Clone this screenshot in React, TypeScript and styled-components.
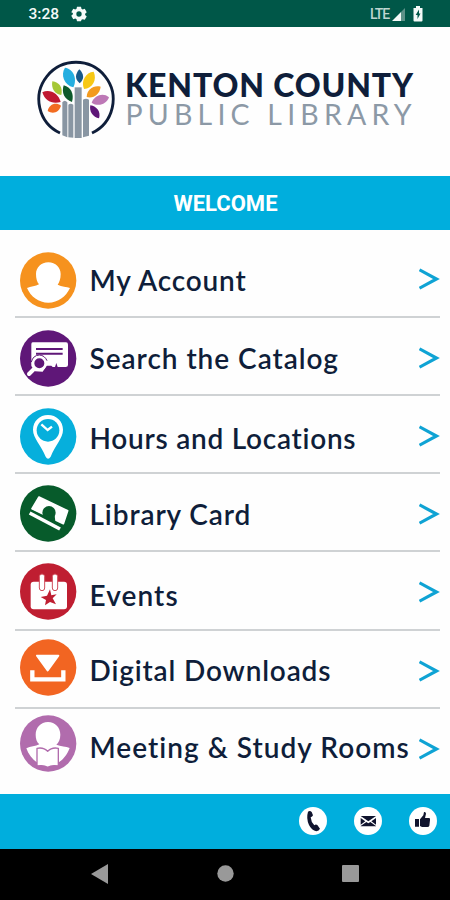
import React from 'react';
import styled, { createGlobalStyle } from 'styled-components';

const GlobalStyle = createGlobalStyle`
  * { box-sizing: border-box; }
  body { margin: 0; background: #fff; }
  svg { display: block; }
`;

const Screen = styled.div`
  width: 450px;
  height: 900px;
  display: flex;
  flex-direction: column;
  overflow: hidden;
  background: #fefefe;
  color: #0f1e3a;
  font-family: Lato, 'Liberation Sans', sans-serif;
`;

const StatusBar = styled.header`
  height: 26.5px;
  flex: none;
  display: flex;
  align-items: center;
  padding: 2px 27px 0 28.5px;
  background: #005748;
  font-family: Roboto, sans-serif;
`;

const Clock = styled.span`
  color: #f4faf8;
  font-size: 15.5px;
  font-weight: 500;
  line-height: 20px;
  margin-right: 12px;
`;

const StatusGroup = styled.div`
  margin-left: auto;
  display: flex;
  align-items: center;
`;

const Network = styled.span`
  color: #bfd5d0;
  font-size: 14px;
  font-weight: 500;
  letter-spacing: -1.1px;
  line-height: 20px;
  margin-right: 3px;
`;

const Brand = styled.section`
  height: 149px;
  flex: none;
  display: flex;
  align-items: flex-start;
  padding: 23.5px 0 0 30px;
`;

const BrandArt = styled.svg`
  width: 95px;
  height: 100px;
  flex: none;
  overflow: visible;
`;

const Wordmark = styled.div`
  padding-top: 20px;
  display: flex;
  flex-direction: column;
  white-space: nowrap;
`;

const BrandName = styled.span`
  font-size: 32px;
  font-weight: 900;
  letter-spacing: 0.85px;
  line-height: 30px;
`;

const BrandKind = styled.span`
  margin-left: 0.5px;
  font-size: 28.500px;
  font-weight: 400;
  letter-spacing: 5.2px;
  line-height: 28px;
  color: #8c99a6;
`;

const Banner = styled.h1`
  height: 54px;
  flex: none;
  margin: 0;
  padding: 2px 0 0 1px;
  display: flex;
  align-items: center;
  justify-content: center;
  background: #00aedd;
  color: #fff;
  font: 700 22px/26px Roboto, sans-serif;
`;

const Menu = styled.nav`
  flex: none;
  height: 564px;
  display: flex;
  flex-direction: column;
  padding: 0 10px 0 15px;
`;

const MenuRow = styled.a<{ $height: number }>`
  height: ${(p) => p.$height}px;
  flex: none;
  display: grid;
  grid-template-columns: 74.5px 1fr 21px;
  align-items: start;
  border-bottom: 2px solid #cfd2d4;
  &:last-child { border-bottom: 0; }
`;

const Badge = styled.svg<{ $top: number }>`
  width: 57px;
  height: 57px;
  margin: ${(p) => p.$top}px 0 0 4.5px;
`;

const Label = styled.span<{ $top: number; $spacing: number }>`
  margin-top: ${(p) => p.$top}px;
  font-size: 28px;
  font-weight: 600;
  line-height: 32px;
  letter-spacing: ${(p) => p.$spacing}px;
  white-space: nowrap;
`;

const Chevron = styled.svg<{ $top: number }>`
  width: 21px;
  height: 24px;
  margin-top: ${(p) => p.$top}px;
`;

const ActionBar = styled.footer`
  height: 55px;
  flex: none;
  display: flex;
  align-items: center;
  justify-content: flex-end;
  gap: 27px;
  padding-right: 13px;
  background: #00aedd;
`;

const ActionIcon = styled.svg`
  width: 28px;
  height: 28px;
`;

const SystemNav = styled.div`
  flex: 1;
  display: flex;
  justify-content: space-between;
  align-items: center;
  padding: 0 91px 1px;
  background: #000;
`;

const W = '#fff';

type Item = {
  label: string;
  height: number;
  icon: number;
  text: number;
  chevron: number;
  spacing: number;
  color: string;
  art: React.ReactNode;
};

/* Badge artwork is drawn on a 171 x 171 grid. */
const items: Item[] = [
  {
    label: 'My Account', height: 88, icon: 22.5, text: 34, chevron: 37.5, spacing: 0.85, color: '#f6921e',
    art: (
      <path fill={W} d="M85 31C107 31 122 47 122 66C122 81 118 91 113 98C125 104 140 104 150 108C138 134 114 152 85 152C56 152 32 134 21 108C32 103 47 103 57 97C51 90 48 80 48 66C48 47 63 31 85 31Z" />
    ),
  },
  {
    label: 'Search the Catalog', height: 78, icon: 12.3, text: 24.3, chevron: 28, spacing: 0.97, color: '#5f1778',
    art: (
      <>
        <path fill={W} d="M38 37H138Q144 37 144 44V105Q144 111 137 111H113L109 99L105 111H98L94 107H80L68 125L45 124L34 108V43Q34 37 38 37Z" />
        <path stroke="#5f1778" strokeWidth="6" d="M48 57H128M48 71H128" />
        <circle cx="58" cy="100" r="19" fill="#5f1778" stroke={W} strokeWidth="8" />
        <path fill="none" stroke="#5f1778" strokeWidth="3" d="M34 96Q39 76 58 75Q74 76 81 92" />
        <path stroke={W} strokeWidth="12" strokeLinecap="round" d="M42 117L27 132" />
      </>
    ),
  },
  {
    label: 'Hours and Locations', height: 78.5, icon: 12, text: 26.8, chevron: 28, spacing: 0.74, color: '#06afdc',
    art: (
      <>
        <path fill={W} d="M84 21C109 21 129 40 129 65C129 91 105 112 92 146Q84 158 77 146C64 112 39 91 39 65C39 40 59 21 84 21Z" />
        <circle cx="84" cy="67" r="34" fill="#06afdc" />
        <path fill="none" stroke={W} strokeWidth="7" d="M64 49L83 66L96 56" />
      </>
    ),
  },
  {
    label: 'Library Card', height: 78, icon: 11, text: 24, chevron: 27.5, spacing: 0.9, color: '#075b2b',
    art: (
      <>
        <path fill={W} strokeLinejoin="round" stroke={W} strokeWidth="5" d="M57 36L143 77L130 116L36 71Z" />
        <circle cx="87" cy="83" r="20" fill="#075b2b" />
        <path fill="#075b2b" d="M70 91L104 91L106 110L66 92Z" />
        <path stroke={W} strokeWidth="11" d="M29 84L120 132" />
        <path stroke="#075b2b" strokeWidth="4" d="M31 75L128 124" />
      </>
    ),
  },
  {
    label: 'Events', height: 78.5, icon: 10.7, text: 26.5, chevron: 28, spacing: 1.1, color: '#bf1e31',
    art: (
      <>
        <rect x="32" y="56" width="109" height="83" rx="9" fill={W} />
        <g fill={W} stroke="#cf4d5b" strokeWidth="3">
          <rect x="58" y="33" width="16" height="50" rx="8" />
          <rect x="97" y="33" width="16" height="50" rx="8" />
        </g>
        <path fill="#bf1e31" d="M90 79L94 97L110 94L98 106L108 124L90 117L75 127L78 111L62 102L81 98Z" />
      </>
    ),
  },
  {
    label: 'Digital Downloads', height: 78, icon: 8.5, text: 23.5, chevron: 28, spacing: 0.85, color: '#f26522',
    art: (
      <>
        <path fill={W} stroke={W} strokeWidth="6" strokeLinejoin="round" d="M51 50H115L83 94Z" />
        <path fill="none" stroke={W} strokeWidth="13" d="M37 94V121H130V94" />
      </>
    ),
  },
  {
    label: 'Meeting & Study Rooms', height: 85, icon: 6.5, text: 22, chevron: 28, spacing: 1.03, color: '#b16cad',
    art: (
      <>
        <path fill={W} d="M84 21C106 21 121 38 121 59C121 73 116 83 109 89C122 94 138 94 149 99C141 119 131 133 115 143H52C36 133 25 117 19 100C31 94 47 94 58 88C50 81 47 71 47 59C47 38 62 21 84 21Z" />
        <path fill={W} stroke="#b16cad" strokeWidth="4" strokeLinejoin="round" d="M51 100Q71 96 83 109Q95 96 115 100V153Q95 149 83 157Q71 149 51 153Z" />
      </>
    ),
  },
];

const BrandMark = () => (
  <BrandArt viewBox="0 0 285 300">
    <path fill="none" stroke="#0f1e3a" strokeWidth="8.500" d="M90 249A111.5 111.5 0 1 1 186 249" />
    <g fill="#8996a3">
      <path d="M97 157Q104 148 112 157V262L97 256Z" />
      <path d="M115 164Q122 158 130 164V263L115 262Z" />
      <path d="M134 112H155V264H134Z" />
      <path d="M159 149Q168 143 177 149V257L159 262Z" />
    </g>
    <path fill="#24aee0" d="M105 53C129 56 143 85 130 112C102 105 91 74 105 53Z" />
    <path fill="#17598a" d="M148 58C163 73 163 88 149 100C134 87 135 73 148 58Z" />
    <path fill="#f7c815" d="M191 65C202 90 187 115 162 117C152 93 167 67 191 65Z" />
    <path fill="#a5c737" d="M67 94C88 96 99 113 94 135C74 133 63 115 67 94Z" />
    <path fill="#0d5a2b" d="M101 106C123 111 133 133 126 156C103 149 94 128 101 106Z" />
    <path fill="#f39a1e" d="M212 110C209 133 190 147 170 141C171 118 190 105 212 110Z" />
    <path fill="#c01932" d="M37 127C59 115 86 131 92 156C67 164 44 152 37 127Z" />
    <path fill="#f26c21" d="M53 183C57 163 77 155 93 167C87 186 70 194 53 183Z" />
    <path fill="#bd78b6" d="M237 142C229 164 204 171 185 158C194 135 220 127 237 142Z" />
    <path fill="#5f1778" d="M181 166C201 169 213 186 207 205C189 202 177 185 181 166Z" />
  </BrandArt>
);

const SettingsIcon = () => (
  <svg width="16" height="16" viewBox="0 0 24 24">
    <path fill="#f4faf8" fillRule="evenodd" d="M9 1h6l.7 3.2 1.8 1 3.1-1 3 5.1-2.4 2.2v1.9l2.4 2.2-3 5.1-3.1-1-1.8 1L15 23H9l-.7-3.3-1.8-1-3.1 1-3-5.1 2.4-2.2v-1.9L.4 9.3l3-5.1 3.1 1 1.8-1ZM12 8a4 4 0 1 0 0 8a4 4 0 0 0 0-8Z" />
  </svg>
);

export default function App() {
  return (
    <>
      <GlobalStyle />
      <Screen>
        <StatusBar>
          <Clock>3:28</Clock>
          <SettingsIcon />
          <StatusGroup>
            <Network>LTE</Network>
            <svg width="13" height="13" viewBox="0 0 13 13">
              <path fill="#5d9188" d="M9 4L13 0V13H9Z" />
              <path fill="#f4faf8" d="M0 13L9 4V13Z" />
            </svg>
            <svg width="18" height="16" viewBox="0 0 18 16">
              <path fill="#f4faf8" d="M11 0H15V2H17.5V14.5Q17.5 15.5 16.5 15.5H9.5Q8.5 15.5 8.5 14.5V2H11Z" />
              <path fill="#005748" d="M14 3.5L10.7 9H12.5V13L15.5 7.5H14Z" />
            </svg>
          </StatusGroup>
        </StatusBar>
        <Brand>
          <BrandMark />
          <Wordmark>
            <BrandName>KENTON COUNTY</BrandName>
            <BrandKind>PUBLIC LIBRARY</BrandKind>
          </Wordmark>
        </Brand>
        <Banner>WELCOME</Banner>
        <Menu>
          {items.map((item) => (
            <MenuRow key={item.label} $height={item.height}>
              <Badge $top={item.icon} viewBox="0 0 171 171">
                <circle cx="84.5" cy="85.5" r="84.5" fill={item.color} />
                {item.art}
              </Badge>
              <Label $top={item.text} $spacing={item.spacing}>{item.label}</Label>
              <Chevron $top={item.chevron} viewBox="0 0 21 24">
                <path fill="none" stroke="#0fa3d4" strokeWidth="3.2" d="M.5 2.8L17.5 12L.5 21.2" />
              </Chevron>
            </MenuRow>
          ))}
        </Menu>
        <ActionBar>
          <ActionIcon viewBox="0 0 84 84">
            <circle cx="42" cy="42" r="42" fill={W} />
            <path fill="#10142e" d="M27 14Q33 9 38 15L42 25Q40 30 35 31Q36 45 46 55Q50 51 55 54L63 65Q60 72 52 73Q38 70 30 54Q21 34 27 14Z" />
          </ActionIcon>
          <ActionIcon viewBox="0 0 84 84">
            <circle cx="42" cy="42" r="42" fill={W} />
            <path fill="#10142e" d="M20 27H66L43 43ZM20 33L34 43L20 53ZM66 33V53L52 43ZM20 57L37 45L43 49L49 45L66 57V58H20Z" />
          </ActionIcon>
          <ActionIcon viewBox="0 0 84 84">
            <circle cx="42" cy="42" r="42" fill={W} />
            <path fill="#10142e" d="M18 36H30V59H18ZM33 37L43 25L45 15Q51 14 51 20L48 33H61Q64 34 63 39L61 56Q60 60 55 60H39L33 57Z" />
          </ActionIcon>
        </ActionBar>
        <SystemNav>
          <svg width="17" height="20" viewBox="0 0 17 20"><path fill="#999" d="M17 0V20L0 10Z" /></svg>
          <svg width="17" height="17" viewBox="0 0 17 17"><circle cx="8.5" cy="8.5" r="8.2" fill="#999" /></svg>
          <svg width="17" height="17" viewBox="0 0 17 17"><rect width="17" height="17" rx="1" fill="#999" /></svg>
        </SystemNav>
      </Screen>
    </>
  );
}
